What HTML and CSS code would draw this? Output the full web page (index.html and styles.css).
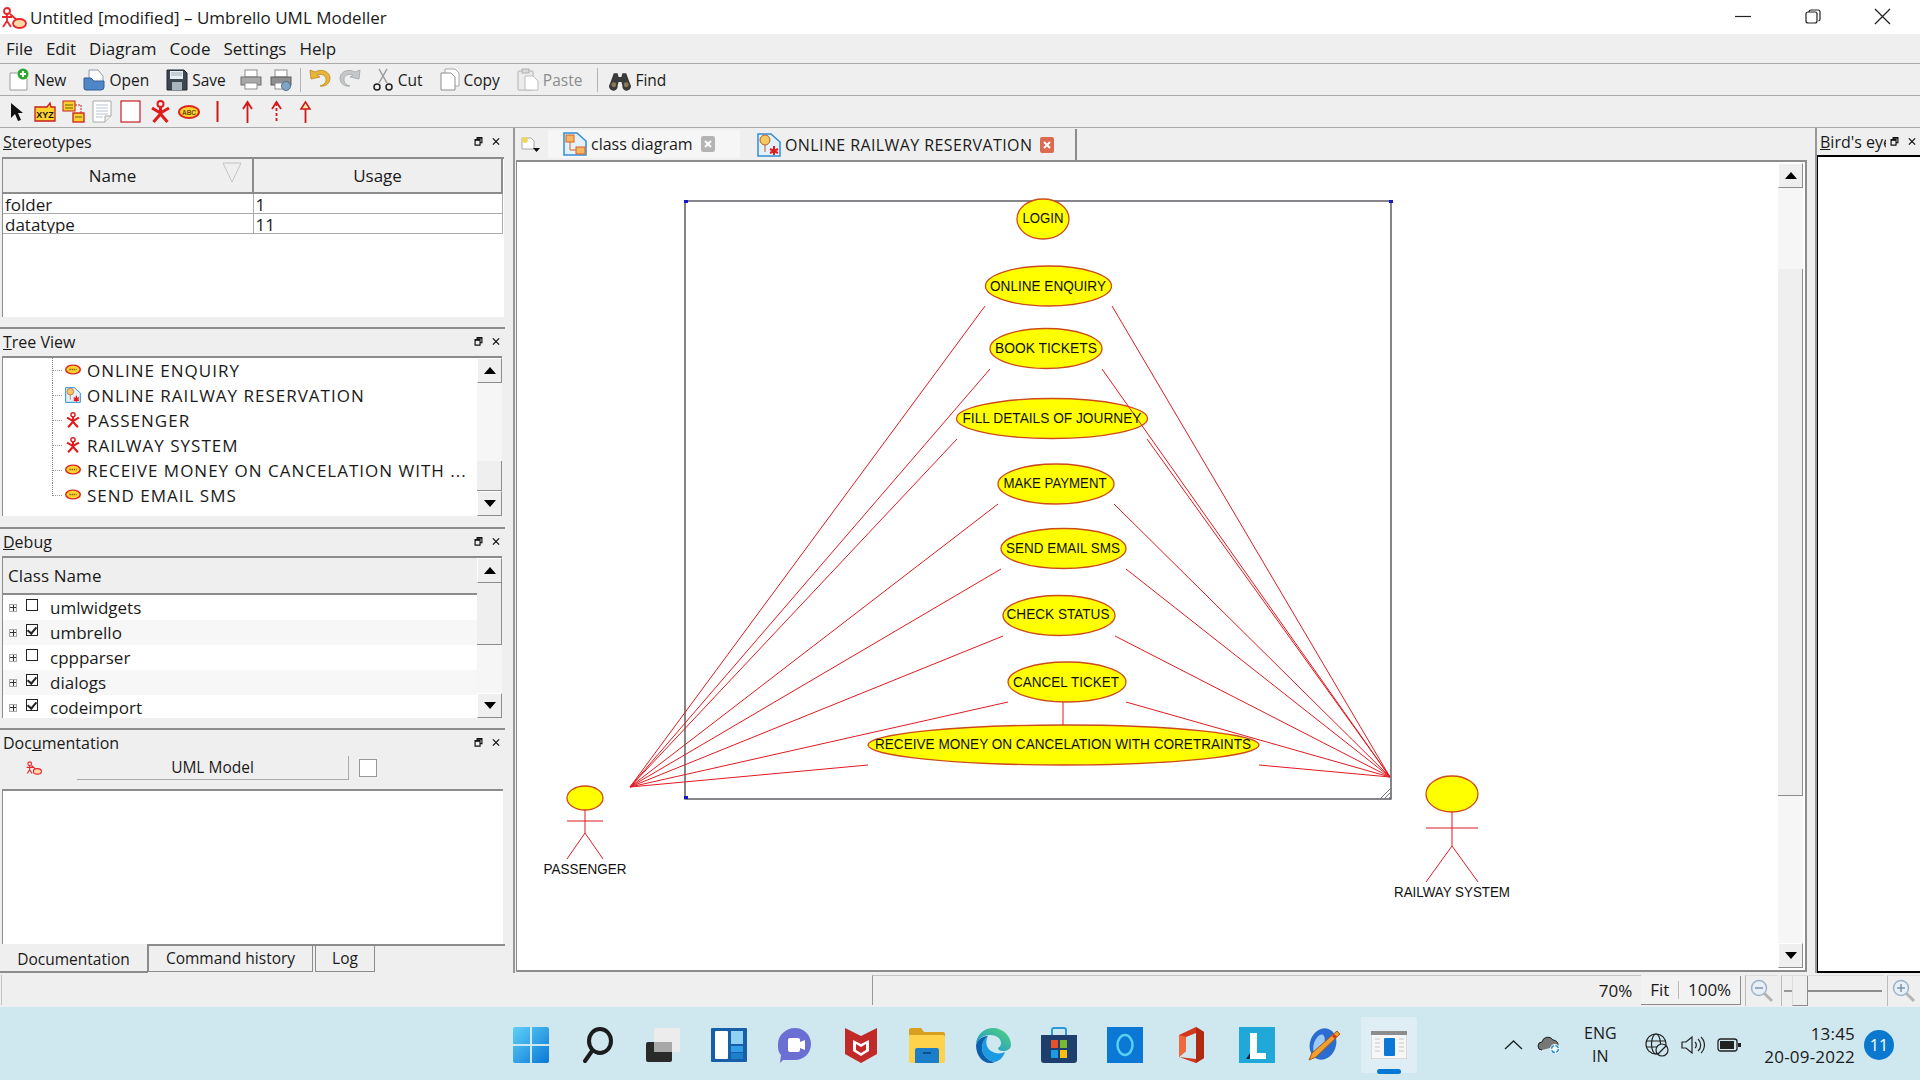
FILE: index.html
```html
<!DOCTYPE html>
<html lang="en">
  <head>
    <meta charset="UTF-8" />
    <title>Untitled [modified] – Umbrello UML Modeller</title>
    <link rel="stylesheet" href="styles.css">
  </head>
  <body>
    <svg class="defs" width="0" height="0">
      <defs>
        <symbol id="umbrello" viewBox="0 0 26 22">
          <circle cx="6" cy="4" r="3" fill="none" stroke="#e8262a" stroke-width="1.800"/>
          <path d="M6 7v7M1 10h10M6 14l-4 6M6 14l4 6M9 7l8 7" fill="none" stroke="#e8262a" stroke-width="1.800"/>
          <ellipse cx="18.500" cy="16.500" rx="6.500" ry="4.500" fill="#ffd9a8" stroke="#e8262a" stroke-width="1.800"/>
        </symbol>
        <symbol id="actor" viewBox="0 0 21 23">
          <circle cx="10.500" cy="4" r="3" fill="none" stroke="#e01b1b" stroke-width="2"/>
          <path d="M10.500 7v7M2 8l8.500 5 8.500-5M10.500 14l-7 8M10.500 14l7 8" fill="none" stroke="#e01b1b" stroke-width="3"/>
        </symbol>
        <symbol id="usecase" viewBox="0 0 22 14">
          <ellipse cx="11" cy="7" rx="10" ry="6" fill="#ffd22e" stroke="#d8281e" stroke-width="2"/>
          <path d="M6 7h10" stroke="#8a5a1a" stroke-width="2" stroke-dasharray="2 1"/>
        </symbol>
        <symbol id="diagram" viewBox="0 0 24 24">
          <path d="M1 1h13l9 8v14H1z" fill="#e4f1fb" stroke="#2f8fd8" stroke-width="1.500"/>
          <rect x="3" y="3" width="8" height="7" fill="#f4b860" stroke="#d8602a"/>
          <rect x="13" y="15" width="9" height="7" fill="#f4b860" stroke="#d8602a"/>
          <path d="M7 10v8h6" fill="none" stroke="#d8602a"/>
        </symbol>
        <symbol id="diagram-uc" viewBox="0 0 24 24">
          <path d="M1 1h13l9 8v14H1z" fill="#e4f1fb" stroke="#2f8fd8" stroke-width="1.500"/>
          <ellipse cx="8" cy="7" rx="5" ry="5" fill="#f4c860" stroke="#b8602a"/>
          <path d="M8 12v7" stroke="#b8602a"/>
          <path d="M17 13v9M13 16l8 4M21 16l-8 4" stroke="#e01b1b" stroke-width="2"/>
        </symbol>
        <symbol id="lens-out" viewBox="0 0 24 24">
          <circle cx="9" cy="9" r="7.500" fill="#e8f0f6" stroke="#9db4c8" stroke-width="1.500"/>
          <path d="M5 9h8" stroke="#7b95ab" stroke-width="1.500"/>
          <path d="M14.500 14.500l7.500 7.500" stroke="#b4b4b4" stroke-width="3"/>
        </symbol>
        <symbol id="lens-in" viewBox="0 0 24 24">
          <circle cx="9" cy="9" r="7.500" fill="#e8f0f6" stroke="#9db4c8" stroke-width="1.500"/>
          <path d="M5 9h8M9 5v8" stroke="#7b95ab" stroke-width="1.500"/>
          <path d="M14.500 14.500l7.500 7.500" stroke="#b4b4b4" stroke-width="3"/>
        </symbol>
        <symbol id="float" viewBox="0 0 9 10">
          <path d="M3 2.500V.7h5.300v5.600H6.500M.7 3h5.500v6H.7z" fill="none" stroke="#111" stroke-width="1.300"/>
          <path d="M.7 3.300h5.500M3 1h5.300" stroke="#111" stroke-width="1.800"/>
        </symbol>
        <symbol id="shut" viewBox="0 0 9 9">
          <path d="M1 1l7 7M8 1L1 8" stroke="#111" stroke-width="1.400"/>
        </symbol>
        <linearGradient id="win-blue" x1="0" y1="0" x2="1" y2="1">
          <stop offset="0" stop-color="#5fd0f8"/>
          <stop offset="1" stop-color="#0a78d6"/>
        </linearGradient>
        <linearGradient id="edge-grad" x1="0" y1="1" x2="1" y2="0">
          <stop offset="0" stop-color="#1a8ed8"/>
          <stop offset="1" stop-color="#52d67a"/>
        </linearGradient>
      </defs>
    </svg>

    <div class="app">
      <div class="titlebar">
        <svg class="logo"><use href="#umbrello"/></svg>
        <span class="title">Untitled [modified] – Umbrello UML Modeller</span>
        <div class="win-controls">
          <svg width="70" height="34" viewBox="0 0 70 34"><path d="M27 16.500h16" stroke="#222" stroke-width="1.200"/></svg>
          <svg width="70" height="34" viewBox="0 0 70 34"><path d="M31 12v-.5a2 2 0 0 1 2-1.500h7a2 2 0 0 1 2 2v7a2 2 0 0 1-1.500 2M30 12h7a2 2 0 0 1 2 2v7a2 2 0 0 1-2 2h-7a2 2 0 0 1-2-2v-7a2 2 0 0 1 2-2z" fill="none" stroke="#222" stroke-width="1.200"/></svg>
          <svg width="70" height="34" viewBox="0 0 70 34"><path d="M27 9l15 15M42 9L27 24" stroke="#222" stroke-width="1.300"/></svg>
        </div>
      </div>

      <div class="menubar">
        <span>File</span><span>Edit</span><span>Diagram</span><span>Code</span><span>Settings</span><span>Help</span>
      </div>

      <div class="toolbar main-tools">
        <div class="tool">
          <svg class="ico" viewBox="0 0 22 23"><path d="M2 5h11l6 6v11H2z" fill="#fff" stroke="#9a9a9a"/><circle cx="15" cy="6" r="5.500" fill="#2fa82f"/><path d="M15 3v6M12 6h6" stroke="#fff" stroke-width="2"/></svg>
          <span>New</span>
        </div>
        <div class="tool">
          <svg class="ico" viewBox="0 0 22 23"><path d="M6 2h9l5 6v8H6z" fill="#fff" stroke="#8f9aa8"/><path d="M1 10h7l3 3h10v6a3 3 0 0 1-3 3H3a2 2 0 0 1-2-2z" fill="#4f86c6" stroke="#2f5f9a"/></svg>
          <span>Open</span>
        </div>
        <div class="tool save">
          <svg class="ico" viewBox="0 0 22 23"><path d="M1 2h17l3 3v17H1z" fill="#3c4650" stroke="#20262c"/><rect x="4" y="3" width="13" height="8" fill="#e8eef2"/><path d="M5 5h11M5 7h11" stroke="#9fb0bc"/><rect x="6" y="14" width="10" height="8" fill="#aab4bc"/></svg>
          <span>Save</span>
        </div>
        <div class="tool tight">
          <svg class="ico" viewBox="0 0 22 23"><rect x="5" y="2" width="12" height="7" fill="#fff" stroke="#8c8c8c"/><rect x="1" y="9" width="20" height="8" fill="#a8a8a8" stroke="#6e6e6e"/><rect x="5" y="15" width="12" height="6" fill="#fff" stroke="#8c8c8c"/></svg>
        </div>
        <div class="tool tight">
          <svg class="ico" viewBox="0 0 22 23"><rect x="5" y="2" width="12" height="7" fill="#fff" stroke="#8c8c8c"/><rect x="1" y="9" width="20" height="8" fill="#8f8f8f" stroke="#5e5e5e"/><rect x="5" y="15" width="9" height="6" fill="#fff" stroke="#8c8c8c"/><circle cx="16" cy="18" r="4.500" fill="#7ea6c6" stroke="#4a6f8e"/></svg>
        </div>
        <div class="sep"></div>
        <div class="tool tight">
          <svg class="ico" viewBox="0 0 22 23"><path d="M1 2l1 9 9-2-3-2c5-2 10 1 9 6-1 3-3 4-6 5 6 1 10-3 10-8C21 4 13 0 6 4z" fill="#e8b53a" stroke="#b88716" stroke-width=".8"/></svg>
        </div>
        <div class="tool wide">
          <svg class="ico" viewBox="0 0 22 23"><path d="M21 2l-1 9-9-2 3-2C9 5 4 8 5 13c1 3 3 4 6 5-6 1-10-3-10-8C1 4 9 0 16 4z" fill="#c4c8ca" stroke="#a0a4a6" stroke-width=".8"/></svg>
        </div>
        <div class="tool">
          <svg class="ico" viewBox="0 0 22 23"><path d="M7 1l8 14M15 1L7 15" stroke="#9a9a9a" stroke-width="1.500"/><circle cx="5" cy="19" r="3" fill="none" stroke="#222" stroke-width="1.500"/><circle cx="17" cy="19" r="3" fill="none" stroke="#222" stroke-width="1.500"/></svg>
          <span>Cut</span>
        </div>
        <div class="tool">
          <svg class="ico ico-sm" viewBox="0 0 20 23"><path d="M5 1h10l4 4v13H5z" fill="#fff" stroke="#a8a8a8"/><path d="M1 5h10l4 4v13H1z" fill="#fff" stroke="#8f8f8f"/></svg>
          <span>Copy</span>
        </div>
        <div class="tool muted">
          <svg class="ico" viewBox="0 0 22 23"><rect x="1" y="3" width="15" height="19" rx="1" fill="#ececec" stroke="#b0b0b0"/><rect x="5" y="1" width="7" height="4" fill="#d8d8d8" stroke="#b0b0b0"/><path d="M8 8h8l5 5v9H8z" fill="#fff" stroke="#bcbcbc"/></svg>
          <span>Paste</span>
        </div>
        <div class="sep sep-find"></div>
        <div class="tool">
          <svg class="ico" viewBox="0 0 23 23"><path d="M5 5h4l1 4h3l1-4h4l4 11a4.500 4.500 0 1 1-8 2l-1-4h-3l-1 4a4.500 4.500 0 1 1-8-2z" fill="#3a3a3a"/><circle cx="5" cy="17" r="2.500" fill="#8a7a5a"/><circle cx="18" cy="17" r="2.500" fill="#8a7a5a"/></svg>
          <span>Find</span>
        </div>
      </div>

      <div class="toolbar uml-tools">
        <svg class="u-ico" viewBox="0 0 14 23"><path d="M1 3v15l4-4 3 7 3-1-3-7h5z" fill="#111"/></svg>
        <svg class="u-ico" viewBox="0 0 22 23"><path d="M1 7h12l3-4 1 4h4v14H1z" fill="#ffd22e" stroke="#c81e1e" stroke-width="1.300"/><text class="xyz" x="11" y="18">XYZ</text></svg>
        <svg class="u-ico" viewBox="0 0 23 23"><rect x="1" y="1" width="12" height="10" fill="#ffd22e" stroke="#c81e1e"/><rect x="11" y="13" width="11" height="9" fill="#ffd22e" stroke="#c81e1e" stroke-width="1.300"/><path d="M13 5h6v8" fill="none" stroke="#c81e1e" stroke-dasharray="2 1"/><path d="M3 5h8M3 8h8M13 17h7" stroke="#6a5a10"/></svg>
        <svg class="u-ico" viewBox="0 0 20 23"><path d="M1 1h18v15l-6 6H1z" fill="#fff" stroke="#a8a8a8"/><path d="M4 5h12M4 8h12M4 11h12M4 14h12M4 17h7" stroke="#b8c4d0"/><path d="M13 22v-6h6" fill="#eee" stroke="#a8a8a8"/></svg>
        <svg class="u-ico" viewBox="0 0 21 23"><rect x="1" y="1" width="19" height="21" fill="#fff" stroke="#c81e1e" stroke-width="1.200"/></svg>
        <svg class="u-ico"><use href="#actor"/></svg>
        <svg class="u-ico u-case" viewBox="0 0 22 14"><ellipse cx="11" cy="7" rx="10" ry="6" fill="#ffd22e" stroke="#d8281e" stroke-width="2"/><text class="abc" x="11" y="9.500">ABC</text></svg>
        <svg class="u-line" viewBox="0 0 3 23"><path d="M1.500 1v21" stroke="#d01818" stroke-width="2"/></svg>
        <svg class="u-arrow" viewBox="0 0 13 23"><path d="M6.500 3v20M2 9l4.500-7L11 9" fill="none" stroke="#d01818" stroke-width="1.800"/></svg>
        <svg class="u-arrow" viewBox="0 0 13 23"><path d="M6.500 3v20" stroke="#d01818" stroke-width="1.800" stroke-dasharray="3 2"/><path d="M2 9l4.500-7L11 9" fill="none" stroke="#d01818" stroke-width="1.800"/></svg>
        <svg class="u-arrow" viewBox="0 0 13 23"><path d="M6.500 8v15" stroke="#d01818" stroke-width="1.800"/><path d="M2 9l4.500-7L11 9z" fill="#ffe9a8" stroke="#d01818" stroke-width="1.500"/></svg>
      </div>

      <div class="main">
        <div class="left-docks">
          <section class="dock dock-stereo">
            <div class="dock-title">
              <span><u>S</u>tereotypes</span>
              <span class="dock-btns"><svg><use href="#float"/></svg><svg><use href="#shut"/></svg></span>
            </div>
            <div class="pane stereo-pane">
              <table class="stereo-table">
                <thead>
                  <tr>
                    <th class="col-name">Name
                      <svg class="sort-mark" viewBox="0 0 20 21"><path d="M1 1h18L10 20z" fill="none" stroke="#c4c4c4"/></svg>
                    </th>
                    <th>Usage</th>
                  </tr>
                </thead>
                <tbody>
                  <tr><td><span class="cell">folder</span></td><td><span class="cell">1</span></td></tr>
                  <tr><td><span class="cell">datatype</span></td><td><span class="cell">11</span></td></tr>
                </tbody>
              </table>
            </div>
          </section>

          <section class="dock dock-tree">
            <div class="dock-title">
              <span><u>T</u>ree View</span>
              <span class="dock-btns"><svg><use href="#float"/></svg><svg><use href="#shut"/></svg></span>
            </div>
            <div class="pane list-pane">
              <ul class="tree">
                <li><i class="branch"></i><svg class="tree-ico"><use href="#usecase"/></svg>ONLINE ENQUIRY</li>
                <li><i class="branch"></i><svg class="tree-ico tree-ico-tall"><use href="#diagram-uc"/></svg>ONLINE RAILWAY RESERVATION</li>
                <li><i class="branch"></i><svg class="tree-ico tree-ico-tall"><use href="#actor"/></svg>PASSENGER</li>
                <li><i class="branch"></i><svg class="tree-ico tree-ico-tall"><use href="#actor"/></svg>RAILWAY SYSTEM</li>
                <li><i class="branch"></i><svg class="tree-ico"><use href="#usecase"/></svg>RECEIVE MONEY ON CANCELATION WITH ...</li>
                <li class="last"><i class="branch"></i><svg class="tree-ico"><use href="#usecase"/></svg>SEND EMAIL SMS</li>
              </ul>
              <div class="vscroll">
                <div class="sb-btn"><i class="tri-up"></i></div>
                <div class="sb-track tree-track-a"></div>
                <div class="sb-thumb tree-thumb"></div>
                <div class="sb-btn"><i class="tri-down"></i></div>
              </div>
            </div>
          </section>

          <section class="dock dock-debug">
            <div class="dock-title">
              <span><u>D</u>ebug</span>
              <span class="dock-btns"><svg><use href="#float"/></svg><svg><use href="#shut"/></svg></span>
            </div>
            <div class="pane list-pane debug-pane">
              <div class="debug-list">
                <div class="debug-head">Class Name</div>
                <div class="debug-row"><i class="expander"></i><i class="check"></i>umlwidgets</div>
                <div class="debug-row alt"><i class="expander"></i><i class="check on"></i>umbrello</div>
                <div class="debug-row"><i class="expander"></i><i class="check"></i>cppparser</div>
                <div class="debug-row alt"><i class="expander"></i><i class="check on"></i>dialogs</div>
                <div class="debug-row"><i class="expander"></i><i class="check on"></i>codeimport</div>
              </div>
              <div class="vscroll">
                <div class="sb-btn"><i class="tri-up"></i></div>
                <div class="sb-thumb debug-thumb"></div>
                <div class="sb-track"></div>
                <div class="sb-btn"><i class="tri-down"></i></div>
              </div>
            </div>
          </section>

          <section class="dock dock-doc">
            <div class="dock-title">
              <span>Doc<u>u</u>mentation</span>
              <span class="dock-btns"><svg><use href="#float"/></svg><svg><use href="#shut"/></svg></span>
            </div>
            <div class="doc-bar">
              <svg class="doc-logo"><use href="#umbrello"/></svg>
              <div class="doc-name">UML Model</div>
              <i class="doc-check"></i>
            </div>
            <div class="doc-text"></div>
            <div class="doc-tabs">
              <div class="doc-tab active">Documentation</div>
              <div class="doc-tab tab-history">Command history</div>
              <div class="doc-tab tab-log">Log</div>
            </div>
          </section>
        </div>

        <div class="center">
          <div class="tabbar">
            <div class="tab-corner">
              <svg width="20" height="16" viewBox="0 0 20 16"><path d="M1 1h9l3 3v8H1z" fill="#fff" stroke="#a8a8a8"/><circle cx="4" cy="3" r="3" fill="#f0d860"/><path d="M12 11h7l-3.500 4z" fill="#111"/></svg>
            </div>
            <div class="tab tab-back">
              <svg class="tab-ico"><use href="#diagram"/></svg>
              <span>class diagram</span>
              <svg class="tab-close" viewBox="0 0 14 16"><rect width="14" height="16" rx="2" fill="#b4b4b4"/><path d="M4 5l6 6M10 5l-6 6" stroke="#fff" stroke-width="2"/></svg>
            </div>
            <div class="tab tab-front">
              <svg class="tab-ico"><use href="#diagram-uc"/></svg>
              <span>ONLINE RAILWAY RESERVATION</span>
              <svg class="tab-close" viewBox="0 0 14 16"><rect width="14" height="16" rx="2" fill="#dc6a50"/><path d="M4 5l6 6M10 5l-6 6" stroke="#fff" stroke-width="2"/></svg>
            </div>
          </div>
          <div class="canvas-frame">
            <svg class="diagram" viewBox="517 162 1261 808">
              <rect class="frame" x="685" y="201" width="706" height="598"/>
              <path class="grip" d="M1380 799l11-11M1384 799l7-7M1388 799l3-3"/>
              <path class="handle" d="M684 200h4v3h-4zM1389 200h4v3h-4zM684 796h4v3h-4z"/>

              <ellipse class="uc" cx="1043" cy="219" rx="26" ry="20"/>
              <ellipse class="uc" cx="1048.500" cy="286" rx="63" ry="20"/>
              <ellipse class="uc" cx="1046" cy="348.500" rx="56" ry="20"/>
              <ellipse class="uc" cx="1052" cy="418.500" rx="95.500" ry="20"/>
              <ellipse class="uc" cx="1056" cy="484" rx="58" ry="20"/>
              <ellipse class="uc" cx="1063.500" cy="548.500" rx="62.500" ry="20"/>
              <ellipse class="uc" cx="1059" cy="615.500" rx="56" ry="20"/>
              <ellipse class="uc" cx="1067" cy="682" rx="59" ry="20"/>
              <ellipse class="uc" cx="1063.500" cy="745" rx="195.500" ry="20"/>

              <g class="links">
                <path d="M630 787L985 306M630 787L990 369M630 787L957 439M630 787L998 504M630 787L1001 569M630 787L1003 636M630 787L1008 702M630 787L868 765"/>
                <path d="M1390 777L1112 306M1390 777L1102 369M1390 777L1147 439M1390 777L1114 504M1390 777L1126 569M1390 777L1115 636M1390 777L1126 702M1390 777L1259 765"/>
                <path d="M1063 702V725"/>
              </g>

              <g class="uc-labels">
                <text x="1043" y="223" textLength="41" lengthAdjust="spacingAndGlyphs">LOGIN</text>
                <text x="1048" y="291" textLength="116" lengthAdjust="spacingAndGlyphs">ONLINE ENQUIRY</text>
                <text x="1046" y="353" textLength="102" lengthAdjust="spacingAndGlyphs">BOOK TICKETS</text>
                <text x="1052" y="423" textLength="179" lengthAdjust="spacingAndGlyphs">FILL DETAILS OF JOURNEY</text>
                <text x="1055" y="488" textLength="103" lengthAdjust="spacingAndGlyphs">MAKE PAYMENT</text>
                <text x="1063" y="553" textLength="114" lengthAdjust="spacingAndGlyphs">SEND EMAIL SMS</text>
                <text x="1058" y="619" textLength="103" lengthAdjust="spacingAndGlyphs">CHECK STATUS</text>
                <text x="1066" y="687" textLength="106" lengthAdjust="spacingAndGlyphs">CANCEL TICKET</text>
                <text x="1063" y="749" textLength="376" lengthAdjust="spacingAndGlyphs">RECEIVE MONEY ON CANCELATION WITH CORETRAINTS</text>
              </g>

              <g class="stick">
                <ellipse class="uc" cx="585" cy="798" rx="18" ry="12"/>
                <path d="M567 821h36M585 810v23M585 833l-18 26M585 833l18 26"/>
                <ellipse class="uc" cx="1452" cy="794" rx="26" ry="18"/>
                <path d="M1426 828h52M1452 812v34M1452 846l-26 36M1452 846l26 36"/>
              </g>
              <text class="actor-label" x="585" y="874" textLength="83" lengthAdjust="spacingAndGlyphs">PASSENGER</text>
              <text class="actor-label" x="1452" y="897" textLength="116" lengthAdjust="spacingAndGlyphs">RAILWAY SYSTEM</text>
            </svg>
            <div class="vscroll canvas-scroll">
              <div class="sb-btn"><i class="tri-up"></i></div>
              <div class="sb-track canvas-track-a"></div>
              <div class="sb-thumb canvas-thumb"></div>
              <div class="sb-track"></div>
              <div class="sb-btn"><i class="tri-down"></i></div>
            </div>
          </div>
        </div>

        <div class="birds">
          <div class="dock-title birds-title">
            <span class="birds-name"><u>B</u>ird's eye view</span>
            <span class="dock-btns"><svg><use href="#float"/></svg><svg><use href="#shut"/></svg></span>
          </div>
          <div class="birds-view"></div>
        </div>
      </div>

      <div class="statusbar">
        <div class="status-left"></div>
        <div class="status-field"><span>70%</span></div>
        <div class="zoom-btns"><span>Fit</span><i></i><span>100%</span></div>
        <div class="zoom-icon"><svg><use href="#lens-out"/></svg></div>
        <div class="zoom-slider"><i class="slider-tick"></i><i class="slider-thumb"></i><i class="slider-line"></i></div>
        <div class="zoom-icon zoom-icon-in"><svg><use href="#lens-in"/></svg></div>
      </div>

      <div class="taskbar">
        <div></div>
        <div class="task-icons">
          <div class="task-item">
            <svg class="task-ico" viewBox="0 0 36 36"><path d="M0 2a2 2 0 0 1 2-2h15v17H0zM19 0h15a2 2 0 0 1 2 2v15H19zM0 19h17v17H2a2 2 0 0 1-2-2zM19 19h17v15a2 2 0 0 1-2 2H19z" fill="url(#win-blue)"/></svg>
          </div>
          <div class="task-item">
            <svg class="task-ico" viewBox="0 0 36 36"><ellipse cx="21" cy="14" rx="11" ry="12" fill="none" stroke="#1c1c1c" stroke-width="4"/><path d="M13 24L6 34" stroke="#1c1c1c" stroke-width="4" stroke-linecap="round"/></svg>
          </div>
          <div class="task-item">
            <svg class="task-ico" viewBox="0 0 36 36"><rect x="1" y="15" width="26" height="20" rx="2" fill="#2a2a2a"/><rect x="9" y="1" width="26" height="24" rx="2" fill="#ececec"/><rect x="9" y="15" width="18" height="10" fill="#a8a8a8"/></svg>
          </div>
          <div class="task-item">
            <svg class="task-ico" viewBox="0 0 36 36"><rect x="0" y="1" width="36" height="34" rx="1" fill="#175fa8"/><rect x="4" y="4" width="13" height="28" rx="1" fill="#fff"/><rect x="20" y="4" width="12" height="13" fill="#8fd2f4"/><rect x="20" y="19" width="12" height="6" fill="#2f9ee4"/><rect x="20" y="26" width="12" height="6" fill="#1c80cc"/></svg>
          </div>
          <div class="task-item">
            <svg class="task-ico" viewBox="0 0 36 36"><path d="M18 1c9 0 16 7 16 16s-7 16-16 16H6l-3 3 1-8C1 25 1 21 1 17 1 8 9 1 18 1z" fill="#6b6fd4"/><rect x="11" y="11" width="12" height="14" rx="2" fill="#fff"/><path d="M23 15l5-2v10l-5-2z" fill="#fff"/></svg>
          </div>
          <div class="task-item">
            <svg class="task-ico" viewBox="0 0 36 36"><path d="M2 1l16 8 16-8v26L18 36 2 27z" fill="#c22a2a"/><path d="M10 13l8 4 8-4v11l-8 5-8-5z" fill="#fff"/><path d="M13 17l5 3 5-3v6l-5 3-5-3z" fill="#c22a2a"/></svg>
          </div>
          <div class="task-item">
            <svg class="task-ico" viewBox="0 0 36 36"><path d="M0 3a2 2 0 0 1 2-2h10l3 4h19a2 2 0 0 1 2 2v5H0z" fill="#d8a020"/><path d="M0 8h34a2 2 0 0 1 2 2v24a2 2 0 0 1-2 2H2a2 2 0 0 1-2-2z" fill="#ffd24c"/><path d="M6 23a2 2 0 0 1 2-2h20a2 2 0 0 1 2 2v13H6z" fill="#1a7fc8"/><path d="M14 26h8" stroke="#0c4f86" stroke-width="2"/></svg>
          </div>
          <div class="task-item">
            <svg class="task-ico" viewBox="0 0 36 36"><path d="M1 18C1 8 9 1 18 1c10 0 18 8 18 17 0 4-4 6-8 6-3 0-5-1-5-3 2-1 3-3 3-5 0-5-5-8-11-8C8 8 3 12 1 18z" fill="url(#edge-grad)"/><path d="M1 18c2-6 7-9 12-9-4 3-6 7-6 12 0 7 6 13 13 14-2 1-4 1-5 1C7 36 1 28 1 18z" fill="#0c5fae"/><path d="M20 35c-7-1-13-7-13-14 0-5 2-9 6-12-3 5-2 12 3 15 4 3 10 3 14 1-2 6-6 9-10 10z" fill="#1a9ae0"/></svg>
          </div>
          <div class="task-item">
            <svg class="task-ico" viewBox="0 0 36 36"><path d="M11 9V3a2 2 0 0 1 2-2h10a2 2 0 0 1 2 2v6" fill="none" stroke="#2c9ad8" stroke-width="2"/><path d="M0 8h36v25a3 3 0 0 1-3 3H3a3 3 0 0 1-3-3z" fill="#1e3f6e"/><rect x="10" y="13" width="7" height="8" fill="#e8502a"/><rect x="19" y="13" width="7" height="8" fill="#7cb82e"/><rect x="10" y="23" width="7" height="8" fill="#1c9ae4"/><rect x="19" y="23" width="7" height="8" fill="#fcc00c"/></svg>
          </div>
          <div class="task-item">
            <svg class="task-ico" viewBox="0 0 36 36"><rect width="36" height="36" fill="#0a78d4"/><ellipse cx="18" cy="18" rx="7.500" ry="10" fill="none" stroke="#58d0f0" stroke-width="2.500"/></svg>
          </div>
          <div class="task-item">
            <svg class="task-ico task-ico-narrow" viewBox="0 0 27 36"><path d="M1 8L18 0l8 5v26l-8 5-17-6 17 2V6L8 10v14l-7 6z" fill="#d4381c"/><path d="M18 0l8 5v26l-8 5z" fill="#b02a12"/><path d="M8 10v14l-7 6V8z" fill="#ee6a3c"/></svg>
          </div>
          <div class="task-item">
            <svg class="task-ico" viewBox="0 0 36 36"><rect width="36" height="36" fill="#20a8d8"/><path d="M11 6h7v20h9v6H11z" fill="#fff"/><path d="M11 6v26l-4 0 4-6z" fill="#0c2a50"/></svg>
          </div>
          <div class="task-item">
            <svg class="task-ico" viewBox="0 0 36 36"><ellipse cx="18" cy="17" rx="13" ry="16" fill="#2a6cd0" transform="rotate(20 18 17)"/><ellipse cx="14" cy="17" rx="5" ry="10" fill="#9ccaf4" transform="rotate(20 14 17)"/><path d="M32 4l3 3L11 30l-7 3 3-7z" fill="#f0a030" stroke="#a85a10"/><path d="M28 8l3 3" stroke="#d83020" stroke-width="3"/></svg>
          </div>
          <div class="task-item active">
            <svg class="task-ico task-ico-app" viewBox="0 0 36 28"><rect width="36" height="28" fill="#f6f6f6" stroke="#bcbcbc"/><rect width="36" height="4" fill="#8c8c8c"/><rect x="13" y="7" width="11" height="18" rx="1" fill="#0a78d4"/><path d="M4 8h5M4 12h5M4 16h5M4 20h5M28 8h5M28 12h5M28 16h5M28 20h5" stroke="#c8c8c8"/></svg>
            <i class="task-dot"></i>
          </div>
        </div>
        <div class="tray">
          <svg class="tray-chev" viewBox="0 0 19 10"><path d="M1 9l8.500-8L18 9" fill="none" stroke="#222" stroke-width="1.300"/></svg>
          <svg class="tray-cloud" viewBox="0 0 25 20"><path d="M5 15a4 4 0 0 1 0-8 6 6 0 0 1 11-2 5 5 0 0 1 5 6" fill="#777" stroke="#222"/><circle cx="18" cy="14" r="5" fill="#f2fbff"/><circle cx="18" cy="14" r="3.500" fill="none" stroke="#1f88d8" stroke-width="1.500" stroke-dasharray="4 1.500"/></svg>
          <div class="tray-lang"><span>ENG</span><span>IN</span></div>
          <svg class="tray-globe" viewBox="0 0 24 24"><circle cx="11" cy="11" r="10" fill="none" stroke="#222" stroke-width="1.200"/><ellipse cx="11" cy="11" rx="4.500" ry="10" fill="none" stroke="#222" stroke-width="1.200"/><path d="M1 8h20M1 14h20" stroke="#222" stroke-width="1.200"/><circle cx="17" cy="17" r="6" fill="#cfe7ef" stroke="#222" stroke-width="1.200"/><path d="M13 21l8-8" stroke="#222" stroke-width="1.200"/></svg>
          <svg class="tray-sound" viewBox="0 0 24 20"><path d="M1 7h4l6-5v16l-6-5H1z" fill="none" stroke="#222" stroke-width="1.200"/><path d="M14 7a4 4 0 0 1 0 6M17 4a8 8 0 0 1 0 12M20 2a11 11 0 0 1 0 16" fill="none" stroke="#222" stroke-width="1.200"/></svg>
          <svg class="tray-batt" viewBox="0 0 24 16"><rect x="1" y="2" width="19" height="12" rx="2.500" fill="none" stroke="#222" stroke-width="1.300"/><rect x="3" y="4" width="14" height="8" fill="#222"/><rect x="21" y="6" width="3" height="4" fill="#222"/></svg>
          <div class="tray-clock"><span>13:45</span><span>20-09-2022</span></div>
          <div class="tray-badge">11</div>
        </div>
      </div>
    </div>
  </body>
</html>
```

FILE: styles.css
```css
* {
  margin: 0;
  padding: 0;
  box-sizing: border-box;
}
body {
  font-family: "Open Sans", "Liberation Sans", sans-serif;
  font-size: 16px;
  color: #1a1a1a;
  background-color: #efefef;
  overflow: hidden;
}
.defs {
  position: absolute;
}
.app {
  display: flex;
  flex-direction: column;
  width: 1920px;
  height: 1080px;
}

/* title + menu */
.titlebar {
  display: flex;
  align-items: center;
  height: 34px;
  background-color: #fff;
}
.logo {
  width: 26px;
  height: 22px;
  margin: 2px 3px 0 1px;
}
.title {
  font-size: 17px;
}
.win-controls {
  display: flex;
  margin-left: auto;
  margin-right: 2px;
}
.menubar {
  display: flex;
  align-items: center;
  gap: 13px;
  height: 30px;
  padding-left: 6px;
  font-size: 17px;
  border-bottom: 1px solid #aaa;
}

/* toolbars */
.toolbar {
  display: flex;
  align-items: center;
  height: 32px;
  padding-left: 8px;
  border-bottom: 1px solid #aaa;
}
.main-tools {
  font-size: 15.500px;
}
.tool {
  display: flex;
  align-items: center;
  gap: 4px;
  margin-right: 17px;
}
.tool.save {
  margin-right: 14px;
}
.tool.tight {
  margin-right: 8px;
}
.tool.wide {
  margin-right: 11px;
}
.tool.muted {
  color: #8c8c8c;
  margin-right: 15px;
}
.ico {
  width: 22px;
  height: 23px;
}
.ico-sm {
  width: 20px;
}
.sep {
  width: 1px;
  height: 24px;
  background-color: #b4b4b4;
  margin-right: 8px;
}
.sep-find {
  margin-right: 11px;
}
.uml-tools {
  padding-left: 10px;
}
.u-ico {
  width: 22px;
  height: 23px;
  margin-right: 7px;
}
.u-ico:nth-child(1) {
  width: 14px;
  margin-right: 10px;
}
.u-ico:nth-child(3) {
  width: 23px;
  margin-left: -1px;
}
.u-ico:nth-child(4) {
  width: 20px;
  margin-right: 8px;
}
.u-ico:nth-child(5) {
  width: 21px;
  margin-right: 9px;
}
.u-ico:nth-child(6) {
  width: 21px;
  margin-right: 7px;
}
.u-case {
  height: 14px;
  margin-right: 16px;
}
.u-line {
  width: 3px;
  height: 23px;
  margin-right: 22px;
}
.u-arrow {
  width: 13px;
  height: 23px;
  margin-right: 16px;
}
.xyz {
  font: bold 9px "Liberation Sans", sans-serif;
  text-anchor: middle;
  fill: #111;
}
.abc {
  font: bold 6.500px "Liberation Sans", sans-serif;
  text-anchor: middle;
  fill: #6a4a10;
}

/* main area */
.main {
  display: flex;
  height: 845px;
}
.left-docks {
  display: flex;
  flex-direction: column;
  width: 505px;
  flex-shrink: 0;
}
.dock {
  border-top: 2px solid #8c8c8c;
}
.dock-stereo {
  height: 199px;
  border-top: none;
}
.dock-tree {
  height: 200px;
}
.dock-debug {
  height: 201px;
}
.dock-doc {
  height: 245px;
}
.dock-title {
  display: flex;
  align-items: center;
  justify-content: space-between;
  height: 25px;
  padding: 0 5px 0 3px;
  white-space: nowrap;
}
.dock-stereo .dock-title,
.birds-title {
  height: 27px;
}
.dock-btns {
  display: flex;
  gap: 9px;
  align-items: center;
}
.dock-btns svg {
  width: 8px;
  height: 9px;
}
.dock-btns svg:first-child {
  width: 9px;
}
.pane {
  margin: 2px 2px 0;
  background-color: #fff;
  border-left: 1px solid #8c8c8c;
  border-top: 2px solid #8c8c8c;
}

/* stereotypes */
.stereo-pane {
  height: 160px;
  width: 502px;
}
.stereo-table {
  width: 500px;
  font-size: 17px;
  border-collapse: collapse;
  table-layout: fixed;
}
.stereo-table th {
  position: relative;
  height: 34px;
  font-weight: 400;
  background-color: #efefef;
  border-right: 2px solid #8c8c8c;
  border-bottom: 2px solid #8c8c8c;
}
.stereo-table td {
  height: 20px;
  padding-left: 2px;
  border-right: 1px solid #aaa;
  border-bottom: 1px solid #aaa;
}
.cell {
  display: block;
  height: 19px;
  padding-top: 2px;
  line-height: 17px;
  overflow: hidden;
}
.col-name {
  width: 250px;
  padding-right: 30px;
}
.sort-mark {
  position: absolute;
  top: 3px;
  right: 10px;
  width: 20px;
  height: 21px;
}

/* tree + debug lists */
.list-pane {
  display: flex;
  height: 160px;
  width: 500px;
}
.debug-pane {
  height: 162px;
}
.tree {
  flex: 1;
  list-style: none;
  padding-left: 49px;
  font-size: 17px;
  letter-spacing: 1px;
}
.tree li {
  display: flex;
  align-items: center;
  height: 25px;
  white-space: nowrap;
}
.branch {
  width: 13px;
  height: 25px;
  border-left: 1px dotted #888;
  background: repeating-linear-gradient(90deg, #999 0 1px, transparent 1px 2px) center / 10px 1px no-repeat;
  background-position: 0 50%;
}
.tree li.last .branch {
  height: 13px;
  align-self: flex-start;
  background-position: 0 100%;
}
.tree-ico {
  width: 16px;
  height: 11px;
  margin-right: 6px;
  margin-bottom: 3px;
}
.tree-ico-tall {
  height: 16px;
  margin-bottom: 2px;
}
.vscroll {
  display: flex;
  flex-direction: column;
  flex-shrink: 0;
  width: 25px;
  background-color: #fff;
}
.sb-btn {
  display: flex;
  align-items: center;
  justify-content: center;
  height: 25px;
  flex-shrink: 0;
  background-color: #efefef;
  border-right: 1px solid #8c8c8c;
  border-bottom: 1px solid #8c8c8c;
  border-left: 1px solid #fff;
  border-top: 1px solid #fff;
}
.sb-track {
  flex: 1;
  background-color: #f6f6f6;
}
.sb-thumb {
  flex-shrink: 0;
  background-color: #efefef;
  border-right: 1px solid #8c8c8c;
  border-bottom: 1px solid #8c8c8c;
}
.tree-thumb {
  height: 30px;
}
.debug-thumb {
  height: 62px;
}
.tri-up {
  width: 0;
  height: 0;
  border-left: 6px solid transparent;
  border-right: 6px solid transparent;
  border-bottom: 7px solid #000;
}
.tri-down {
  width: 0;
  height: 0;
  border-left: 6px solid transparent;
  border-right: 6px solid transparent;
  border-top: 7px solid #000;
}
.debug-list {
  flex: 1;
  font-size: 17px;
}
.debug-head {
  display: flex;
  align-items: center;
  height: 37px;
  padding-left: 5px;
  letter-spacing: 0.1px;
  background-color: #efefef;
  border-bottom: 2px solid #8c8c8c;
}
.debug-row {
  display: flex;
  align-items: center;
  height: 25px;
}
.debug-row.alt {
  background-color: #f7f7f7;
}
.expander {
  width: 8px;
  height: 8px;
  margin: 0 9px 0 6px;
  background:
    linear-gradient(#333, #333) center / 6px 1px no-repeat,
    linear-gradient(#333, #333) center / 1px 6px no-repeat,
    #f4f4f4;
  border: 1px solid #aaa;
}
.check {
  position: relative;
  width: 12px;
  height: 12px;
  margin: -6px 12px 0 0;
  background-color: #fff;
  border: 1px solid #222;
}
.check.on::after {
  content: "";
  position: absolute;
  left: 2px;
  top: 0;
  width: 4px;
  height: 7px;
  border-right: 2px solid #222;
  border-bottom: 2px solid #222;
  transform: rotate(40deg);
}

/* documentation */
.doc-bar {
  display: flex;
  align-items: center;
  height: 25px;
}
.doc-logo {
  width: 16px;
  height: 16px;
  margin: 0 35px 0 26px;
}
.doc-name {
  width: 272px;
  height: 24px;
  line-height: 23px;
  text-align: center;
  font-size: 15.500px;
  border-right: 1px solid #aaa;
  border-bottom: 1px solid #aaa;
}
.doc-check {
  width: 18px;
  height: 18px;
  margin-left: 10px;
  background-color: #fff;
  border: 1px solid #999;
}
.doc-text {
  height: 155px;
  margin: 9px 2px 0;
  width: 501px;
  background-color: #fff;
  border-top: 2px solid #8c8c8c;
  border-left: 1px solid #8c8c8c;
}
.doc-tabs {
  display: flex;
  align-items: flex-start;
  border-top: 2px solid #8c8c8c;
  height: 29px;
}
.doc-tab {
  height: 26px;
  line-height: 24px;
  text-align: center;
  font-size: 15.500px;
  border-right: 1px solid #8c8c8c;
  border-bottom: 1px solid #8c8c8c;
  border-left: 1px solid #8c8c8c;
}
.doc-tab.active {
  width: 148px;
  height: 29px;
  margin-top: -2px;
  line-height: 30px;
  border-left: none;
  background-color: #efefef;
  border-bottom: 2px solid #8c8c8c;
}
.tab-history {
  width: 165px;
}
.tab-log {
  width: 60px;
  margin-left: 2px;
}

/* centre */
.center {
  display: flex;
  flex-direction: column;
  width: 1294px;
  margin-left: 8px;
  flex-shrink: 0;
  border-left: 2px solid #999;
}
.tabbar {
  display: flex;
  align-items: stretch;
  height: 32px;
}
.tab-corner {
  display: flex;
  align-items: center;
  width: 33px;
  padding: 2px 0 0 6px;
}
.tab {
  display: flex;
  align-items: center;
  gap: 4px;
  margin-top: 2px;
  white-space: nowrap;
}
.tab-back {
  width: 192px;
  padding-left: 15px;
  background-color: #f6f6f6;
  height: 28px;
}
.tab-front {
  width: 337px;
  margin-top: 1px;
  padding-left: 17px;
  letter-spacing: 0.4px;
  border-right: 2px solid #8c8c8c;
}
.tab-ico {
  width: 24px;
  height: 24px;
  flex-shrink: 0;
}
.tab-close {
  width: 14px;
  height: 16px;
  margin-left: 4px;
}
.canvas-frame {
  display: flex;
  width: 1291px;
  height: 812px;
  margin-left: 1px;
  background-color: #fff;
  border-top: 2px solid #8c8c8c;
  border-left: 1px solid #8c8c8c;
  border-right: 2px solid #8c8c8c;
  border-bottom: 2px solid #8c8c8c;
}
.diagram {
  width: 1261px;
  height: 808px;
  flex-shrink: 0;
}
.canvas-scroll {
  padding: 1px 0 2px;
}
.canvas-track-a {
  flex: none;
  height: 81px;
}
.canvas-thumb {
  height: 527px;
}
.frame {
  fill: none;
  stroke: #44444c;
  stroke-width: 1.300;
}
.grip {
  stroke: #777;
  fill: none;
}
.handle {
  fill: #1414c8;
}
.uc {
  fill: #ffff00;
  stroke: #cc4a1c;
  stroke-width: 1.300;
}
.links path,
.stick path {
  fill: none;
  stroke: #e01a20;
  stroke-width: 1;
}
.uc-labels text,
.actor-label {
  font-family: "Liberation Sans", sans-serif;
  font-size: 15px;
  text-anchor: middle;
  fill: #111;
}

/* bird's eye */
.birds {
  display: flex;
  flex-direction: column;
  width: 105px;
  margin-left: 8px;
  border-left: 2px solid #999;
  flex-shrink: 0;
}
.birds-title {
  padding: 0 4px 0 3px;
  gap: 4px;
}
.birds-name {
  width: 72px;
  overflow: hidden;
}
.birds-view {
  width: 103px;
  height: 818px;
  background-color: #fff;
  border: 1px solid #000;
  border-right: none;
  border-top-width: 2px;
  border-bottom-width: 2px;
}

/* status */
.statusbar {
  display: flex;
  align-items: center;
  height: 34px;
}
.status-left {
  width: 873px;
  height: 30px;
  border-left: 1px solid transparent;
  box-shadow: inset 2px 0 0 -1px #c4c4c4;
}
.status-field {
  display: flex;
  align-items: center;
  justify-content: flex-end;
  width: 770px;
  height: 30px;
  padding-right: 9px;
  font-size: 17px;
  border-left: 1px solid #999;
  border-top: 1px solid #c4c4c4;
}
.zoom-btns {
  display: flex;
  align-items: center;
  justify-content: space-between;
  width: 100px;
  height: 29px;
  padding: 0 9px;
  font-size: 17px;
  background-color: #f2f2f2;
  border-right: 1px solid #8c8c8c;
  border-bottom: 1px solid #8c8c8c;
}
.zoom-btns i {
  width: 1px;
  height: 18px;
  background-color: #bbb;
}
.zoom-icon {
  display: flex;
  align-items: center;
  justify-content: center;
  width: 33px;
  height: 31px;
  margin-left: 4px;
  border-left: 1px solid #bbb;
  border-top: 1px solid #ddd;
}
.zoom-icon svg {
  width: 24px;
  height: 24px;
}
.zoom-icon-in {
  margin-left: 3px;
}
.zoom-slider {
  display: flex;
  align-items: center;
  width: 103px;
  height: 31px;
  margin-left: 3px;
  padding-left: 2px;
  border-left: 1px solid #bbb;
  border-top: 1px solid #ddd;
}
.slider-tick {
  width: 8px;
  height: 2px;
  background-color: #999;
}
.slider-thumb {
  width: 16px;
  height: 30px;
  background-color: #efefef;
  border-left: 1px solid #ddd;
  border-right: 1px solid #8c8c8c;
  border-bottom: 1px solid #8c8c8c;
}
.slider-line {
  width: 74px;
  height: 2px;
  background-color: #8c8c8c;
}

/* taskbar */
.taskbar {
  display: grid;
  grid-template-columns: 1fr auto 1fr;
  height: 73px;
  background-color: #cfe7ef;
}
.task-icons {
  display: flex;
  align-items: center;
}
.task-item {
  position: relative;
  display: flex;
  align-items: center;
  justify-content: center;
  width: 66px;
  height: 56px;
  margin-top: 2px;
}
.task-ico {
  width: 36px;
  height: 36px;
}
.task-ico-narrow {
  width: 27px;
}
.task-ico-app {
  height: 28px;
}
.task-item.active {
  background-color: #dfeef4;
  border-radius: 6px;
  background-clip: content-box;
  padding: 0 5px;
  height: 56px;
}
.task-dot {
  position: absolute;
  left: 21px;
  bottom: -1px;
  width: 24px;
  height: 5px;
  border-radius: 3px;
  background-color: #0078d4;
}
.tray {
  display: flex;
  align-items: center;
  justify-content: flex-end;
  padding-right: 26px;
  margin-top: 2px;
}
.tray-chev {
  width: 19px;
  height: 10px;
  margin-right: 14px;
}
.tray-cloud {
  width: 25px;
  height: 20px;
  margin-right: 21px;
}
.tray-lang {
  display: flex;
  flex-direction: column;
  align-items: center;
  width: 34px;
  line-height: 23px;
  margin-right: 28px;
}
.tray-globe {
  width: 24px;
  height: 24px;
  margin-right: 12px;
}
.tray-sound {
  width: 24px;
  height: 20px;
  margin-right: 12px;
}
.tray-batt {
  width: 24px;
  height: 16px;
  margin-right: 23px;
}
.tray-clock {
  display: flex;
  flex-direction: column;
  align-items: flex-end;
  font-size: 17px;
  letter-spacing: 0.2px;
  line-height: 23px;
  margin-right: 9px;
}
.tray-badge {
  width: 30px;
  height: 30px;
  line-height: 30px;
  text-align: center;
  color: #fff;
  border-radius: 50%;
  background-color: #0b78cf;
}
```
